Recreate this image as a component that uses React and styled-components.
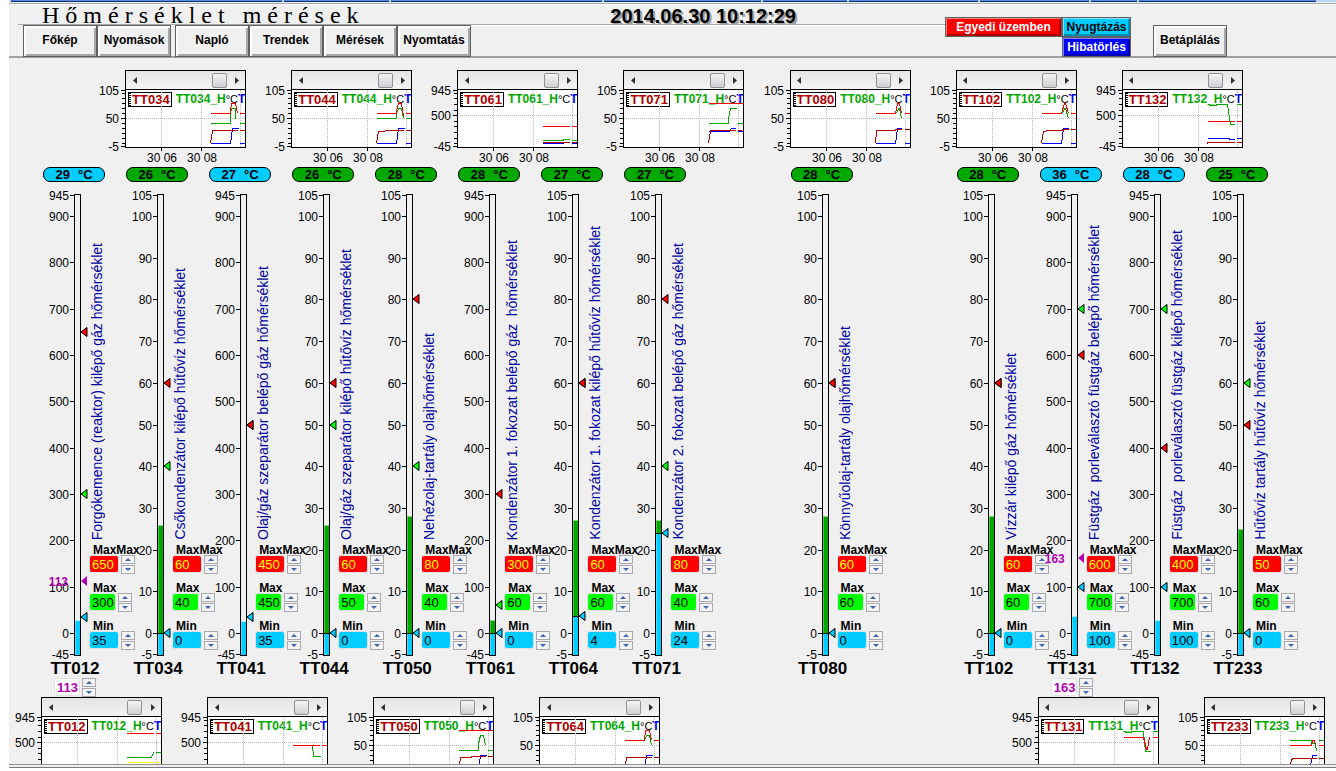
import React, { useState } from 'react'
import styled, { createGlobalStyle } from 'styled-components'

const sans = '"Liberation Sans", Arial, sans-serif'

const colors = {
    red: '#ff0000',
    dark: '#b00000',
    green: '#00a800',
    lime: '#00ff00',
    cyan: '#00ccff',
    blue: '#0000ff',
    yellow: '#ffff00',
    purple: '#b000b0'
}

const GlobalStyle = createGlobalStyle`
    * {
        box-sizing: border-box;
    }

    body {
        margin: 0;
        background-color: white;
        font-family: ${sans};
        color: black;
    }

    h1, p {
        margin: 0;
    }
`;

const Page = styled.div`
    height: 100vh;
    display: flex;
    flex-direction: column;
    padding-left: 9px;
    overflow: hidden;
`;

const TabStrip = styled.div`
    display: flex;
    gap: 2px;
    height: 5px;
    flex-shrink: 0;
    padding: 0 20px 0 2px;
    background: linear-gradient(#b8d4f8 0 2px, #f0f0f0 2px 3px, #a8a8a8 3px 4px, #ffffff 4px 5px);
`;

const StripTab = styled.div`
    flex: ${props => props.$grow};
    height: 2px;
    background: linear-gradient(#5c8cd0 0 1px, #003080 1px 2px);
`;

const Header = styled.header`
    display: flex;
    flex-shrink: 0;
    height: 53px;
    padding-right: 109px;
    background-color: #f0f0f0;
    border-bottom: 2px solid #a0a0a0;
`;

const HeaderMain = styled.div`
    flex: 1;
    padding-left: 9px;
`;

const TitleRow = styled.div`
    display: flex;
    justify-content: space-between;
    height: 20px;
    padding: 0 149px 0 24px;
    border-bottom: 1px solid #a8a8a8;
    box-shadow: 0 1px 0 white;
`;

const Title = styled.h1`
    font-family: "Liberation Serif", "Times New Roman", serif;
    font-size: 24px;
    font-weight: 400;
    line-height: 20px;
    letter-spacing: 6px;
    white-space: nowrap;
`;

const Clock = styled.time`
    font-size: 20px;
    font-weight: 700;
    line-height: 22px;
    text-shadow: 2px 2px 0 #a0a0a0;
    white-space: nowrap;
`;

const Nav = styled.nav`
    display: flex;
    gap: 4px;
    padding-left: 5px;
`;

const NavGroup = styled.div`
    display: flex;
`;

const NavButton = styled.button`
    width: 74px;
    height: 32px;
    padding: 0 0 2px;
    font-family: ${sans};
    font-size: 12px;
    font-weight: 700;
    white-space: nowrap;
    background-color: #f0f0f0;
    border: 1px solid #606060;
    box-shadow: inset 2px 2px 0 white, inset -2px -2px 0 #a8a8a8;
`;

const Alarms = styled.div`
    display: grid;
    grid-template-columns: 117px 69px;
    grid-template-rows: 20px 20px;
    align-content: start;
    padding-top: 12px;
    margin-right: 22px;
`;

const AlarmButton = styled.button`
    grid-column: ${props => props.$column};
    padding: 0;
    font-family: ${sans};
    font-size: 12px;
    font-weight: 700;
    line-height: 14px;
    white-space: nowrap;
    color: ${props => props.$color};
    background-color: ${props => props.$background};
    border: 1px solid #606060;
    box-shadow: inset 1px 1px 0 rgba(255, 255, 255, 0.5), inset -2px -2px 0 rgba(0, 0, 0, 0.3);
`;

const FeedButton = styled(NavButton)`
    margin-top: 20px;
`;

const Main = styled.main`
    flex: 1;
    min-height: 0;
    padding-top: 12px;
    overflow: hidden;
    background-color: #f0f0f0;
    border-bottom: 1px solid #909090;
`;

const StatusBar = styled.footer`
    flex-shrink: 0;
    height: 6px;
    border-top: 2px solid #f0f0f0;
    background: linear-gradient(#787880 0 1px, #ffffff 1px);
`;

const Slots = styled.div`
    display: grid;
    grid-template-columns: repeat(15, minmax(0, 1fr));
    padding-left: ${props => props.$left}px;
    padding-right: ${props => 81 - props.$left}px;
`;

/* Trend windows */

const TrendBox = styled.section`
    grid-column: ${props => props.$slot};
    display: grid;
    grid-template-columns: 26px 121px;
    height: 97px;
`;

const TrendAxis = styled.svg`
    width: 26px;
    height: 77px;
    overflow: visible;
`;

const TrendWindow = styled.div`
    height: 78px;
    border: 1px solid black;
    background-color: white;
`;

const ScrollBar = styled.div`
    display: flex;
    align-items: center;
    height: 19px;
    padding: 0 5px;
    background: linear-gradient(#e4e4e4, #f4f4f4);
    border-bottom: 1px solid black;
`;

const ScrollButton = styled.button`
    display: flex;
    align-items: center;
    justify-content: center;
    width: 7px;
    height: 16px;
    padding: 0;
    border: none;
    background: none;
`;

const ScrollRange = styled.input`
    appearance: none;
    flex: 1;
    min-width: 0;
    height: 16px;
    margin: 0 2px;
    background: none;

    &::-webkit-slider-thumb {
        appearance: none;
        width: 15px;
        height: 15px;
        border: 1px solid #909090;
        border-radius: 2px;
        background: linear-gradient(#f4f4f4, #d0d0d4);
    }
`;

const PlotArea = styled.div`
    display: grid;
    height: 57px;

    & > * {
        grid-area: 1 / 1;
    }
`;

const Plot = styled.svg`
    width: 119px;
    height: 57px;
    overflow: visible;
`;

const Legend = styled.div`
    display: flex;
    align-items: flex-start;
    width: 119px;
    padding: 2px 0 0 2px;
    overflow: hidden;
    font-size: 12px;
    font-weight: 700;
    line-height: 15px;
    white-space: nowrap;
`;

const LegendTag = styled.span`
    margin-right: 4px;
    padding: 0 1px 0 3px;
    font-size: 13px;
    line-height: 13px;
    color: ${colors.dark};
    background: repeating-linear-gradient(black 0 1px, transparent 1px 2px) left / 2px 100% no-repeat;
    border: 1px solid black;
`;

const LegendHigh = styled.span`
    width: 51px;
    color: ${colors.green};
`;

const LegendUnit = styled.span`
    width: 13px;
    font-size: 11px;
    font-weight: 400;
`;

const LegendTime = styled.span`
    color: ${colors.blue};
`;

const AxisText = styled.text`
    font-family: ${sans};
    font-size: 12px;
`;

/* Gauges */

const GaugeBox = styled.section`
    grid-column: ${props => props.$slot};
    display: flex;
    flex-direction: column;
    height: 530px;
`;

const Pill = styled.output`
    display: flex;
    justify-content: center;
    gap: 8px;
    width: 62px;
    height: 15px;
    font-size: 13px;
    font-weight: 700;
    line-height: 13px;
    background-color: ${props => props.$color};
    border: 1px solid black;
    border-radius: 7px;
`;

const GaugeBody = styled.div`
    display: grid;
    grid-template-columns: 31px 7px 60px;
    height: 462px;
    margin-top: 12px;
`;

const Scale = styled.svg`
    width: 31px;
    height: 462px;
    overflow: visible;
`;

const Bar = styled.div`
    position: relative;
    border: 1px solid black;
    background-color: #f0f0f0;
`;

const Fill = styled.div`
    position: absolute;
    left: 0;
    right: 0;
    bottom: 0;
    background-color: ${props => props.$color};
    border-top: 1px solid ${props => props.$top};
    box-shadow: inset 1px 0 0 rgba(255, 255, 255, 0.3);
`;

const Marker = styled.svg`
    position: absolute;
    left: 6px;
    width: 7px;
    height: 10px;
    margin-top: -6px;
`;

const SetPoint = styled.span`
    position: absolute;
    right: 12px;
    margin-top: -8px;
    font-size: 12px;
    font-weight: 700;
    line-height: 16px;
    color: ${colors.purple};
`;

const GaugeSide = styled.div`
    display: flex;
    flex-direction: column;
    justify-content: flex-end;
    align-items: flex-start;
    padding: 0 0 6px 8px;
`;

const Description = styled.p`
    writing-mode: vertical-rl;
    transform: rotate(180deg);
    margin-bottom: 5px;
    font-size: 14px;
    line-height: 16px;
    white-space: pre;
    color: #0000a0;
`;

const Setters = styled.div`
    display: flex;
    flex-direction: column;
    gap: 9px;
`;

const SetterBox = styled.div`
    display: grid;
    grid-template-columns: auto 14px;
    justify-content: start;
    column-gap: 2px;
`;

const SetterLabel = styled.label`
    grid-column: 1 / -1;
    width: 0;
    padding-left: 4px;
    font-size: 12px;
    font-weight: 700;
    line-height: 10px;
`;

const SetterInput = styled.input`
    width: ${props => props.$width}px;
    height: 18px;
    padding: 0 0 0 2px;
    font-family: ${sans};
    font-size: 13px;
    color: ${props => props.$color};
    background-color: ${props => props.$background};
    border: 1px solid #e0e0e8;
    border-radius: 3px;
`;

const TargetInput = styled(SetterInput)`
    font-weight: 700;
`;

const Spinner = styled.div`
    display: flex;
    flex-direction: column;
    gap: 1px;
`;

const SpinButton = styled.button`
    display: flex;
    align-items: center;
    justify-content: center;
    width: 14px;
    height: 9px;
    padding: 0;
    background-color: #f4f4f4;
    border: 1px solid #a8a8b0;
`;

const Tag = styled.h2`
    width: 64px;
    margin: 4px 0 0;
    font-size: 17px;
    font-weight: 700;
    line-height: 18px;
    text-align: center;
`;

const Target = styled.div`
    display: flex;
    gap: 2px;
    padding-left: 11px;
`;

const SCALES = {
    low: { min: -5, max: 105, mid: 50, step: 10, labels: [100, 90, 80, 70, 60, 50, 40, 30, 20, 10, 0] },
    high: { min: -45, max: 945, mid: 500, step: 100, labels: [900, 800, 700, 600, 500, 400, 300, 200, 100, 0] }
}

const gauges = [
    { slot: 1, tag: 'TT012', scale: 'high', value: 29, maxmax: 650, max: 300, min: 35, target: 113, text: 'Forgókemence (reaktor) kilépő gáz hőmérséklet' },
    { slot: 2, tag: 'TT034', scale: 'low', value: 26, maxmax: 60, max: 40, min: 0, text: 'Csőkondenzátor kilépő hűtővíz hőmérséklet' },
    { slot: 3, tag: 'TT041', scale: 'high', value: 27, maxmax: 450, max: 450, min: 35, text: 'Olaj/gáz szeparátor belépő gáz hőmérséklet' },
    { slot: 4, tag: 'TT044', scale: 'low', value: 26, maxmax: 60, max: 50, min: 0, text: 'Olaj/gáz szeparátor kilépő hűtővíz hőmérséklet' },
    { slot: 5, tag: 'TT050', scale: 'low', value: 28, maxmax: 80, max: 40, min: 0, text: 'Nehézolaj-tartály olajhőmérséklet' },
    { slot: 6, tag: 'TT061', scale: 'high', value: 28, maxmax: 300, max: 60, min: 0, text: 'Kondenzátor 1. fokozat belépő gáz  hőmérséklet' },
    { slot: 7, tag: 'TT064', scale: 'low', value: 27, maxmax: 60, max: 60, min: 4, text: 'Kondenzátor 1. fokozat kilépő hűtővíz hőmérséklet' },
    { slot: 8, tag: 'TT071', scale: 'low', value: 27, maxmax: 80, max: 40, min: 24, text: 'Kondenzátor 2. fokozat belépő gáz hőmérséklet' },
    { slot: 10, tag: 'TT080', scale: 'low', value: 28, maxmax: 60, max: 60, min: 0, text: 'Könnyűolaj-tartály olajhőmérséklet' },
    { slot: 12, tag: 'TT102', scale: 'low', value: 28, maxmax: 60, max: 60, min: 0, text: 'Vízzár kilépő gáz hőmérséklet' },
    { slot: 13, tag: 'TT131', scale: 'high', value: 36, maxmax: 600, max: 700, min: 100, target: 163, text: 'Füstgáz  porleválasztó füstgáz belépő hőmérséklet' },
    { slot: 14, tag: 'TT132', scale: 'high', value: 28, maxmax: 400, max: 700, min: 100, text: 'Füstgáz  porleválasztó füstgáz kilépő hőmérséklet' },
    { slot: 15, tag: 'TT233', scale: 'low', value: 25, maxmax: 50, max: 60, min: 0, text: 'Hűtővíz tartály hűtővíz hőmérséklet' }
]

// every line is [color, path] in plot pixels
const topTrends = [
    { slot: 2, tag: 'TT034', scale: 'low', lines: [
        ['blue', 'M84 53H104L106 38H112M113 53H118'],
        ['dark', 'M84 53L86 40H111M113 40H118'],
        ['green', 'M84 33H104V23L105 18H109V28M113 33H118'],
        ['red', 'M84 23H104V20L105 13H109L111 23M113 23H118']
    ] },
    { slot: 4, tag: 'TT044', scale: 'low', lines: [
        ['blue', 'M84 53H104L106 38H112M113 53H118'],
        ['dark', 'M84 53L86 41H92L93 40H111M113 40H118'],
        ['green', 'M84 28H104V23L106 18H109L111 28M113 28H118'],
        ['red', 'M84 23H104V20L106 13H109L111 26M113 23H118']
    ] },
    { slot: 6, tag: 'TT061', scale: 'high', lines: [
        ['blue', 'M84 53H105M113 53H118'],
        ['dark', 'M84 52H111M113 52H118'],
        ['green', 'M84 50H105V49H111M113 50H118'],
        ['red', 'M84 36H111M113 36H118']
    ] },
    { slot: 8, tag: 'TT071', scale: 'low', lines: [
        ['blue', 'M84 41H105L107 38H111M113 41H118'],
        ['dark', 'M84 53L86 41V40H111M113 40H117V39'],
        ['green', 'M84 33H104V28L106 18H112M113 33H118'],
        ['red', 'M84 13H118']
    ] },
    { slot: 10, tag: 'TT080', scale: 'low', lines: [
        ['blue', 'M84 53H104L106 38H110M113 53H118'],
        ['dark', 'M84 53L85 40H104V39H110M113 39H118'],
        ['green', 'M105 23L107 18H108L110 28'],
        ['red', 'M84 23H104L106 13H108L110 23M113 23H118']
    ] },
    { slot: 12, tag: 'TT102', scale: 'low', lines: [
        ['blue', 'M84 53H104L106 38H111M113 53H118'],
        ['dark', 'M84 53L86 41L92 40H105V39H111M113 39H118'],
        ['green', 'M105 23L107 18H108L111 28'],
        ['red', 'M84 23H104L107 13H108L111 23M113 23H118']
    ] },
    { slot: 14, tag: 'TT132', scale: 'high', lines: [
        ['blue', 'M84 48H106V49H111M113 48H118'],
        ['dark', 'M84 53V52H111M113 52H118'],
        ['red', 'M84 31H111M113 31H118'],
        ['green', 'M84 14H86V15H93V14H104L107 34H111M113 14H118']
    ] }
]

const bottomTrends = [
    { slot: 1, tag: 'TT012', scale: 'high', lines: [
        ['yellow', 'M84 45H111M113 45H118'],
        ['green', 'M84 40H109L111 35M113 35H118'],
        ['red', 'M84 16H111M113 16H118']
    ] },
    { slot: 3, tag: 'TT041', scale: 'high', lines: [
        ['green', 'M104 28L105 39H112'],
        ['red', 'M84 28H111M113 28H118']
    ] },
    { slot: 5, tag: 'TT050', scale: 'low', lines: [
        ['blue', 'M104 53L106 38H112'],
        ['dark', 'M84 53L86 40H97V39H111M113 39H118'],
        ['green', 'M84 33H104V26L106 18H109L111 28M113 33H118'],
        ['red', 'M84 13H118']
    ] },
    { slot: 7, tag: 'TT064', scale: 'low', lines: [
        ['blue', 'M104 53L106 38H112'],
        ['dark', 'M84 53L86 40H111M113 40H118'],
        ['green', 'M104 23L106 18H109L111 28'],
        ['red', 'M84 23H104L105 13H109L111 23M113 23H118']
    ] },
    { slot: 13, tag: 'TT131', scale: 'high', lines: [
        ['green', 'M84 14H86V15H92V14H104L106 34H111M113 14H118'],
        ['red', 'M84 20H104L107 32H108L110 20M113 20H118']
    ] },
    { slot: 15, tag: 'TT233', scale: 'low', lines: [
        ['blue', 'M104 53L107 38H111'],
        ['dark', 'M84 53L86 42L88 41H111M113 41H118'],
        ['green', 'M84 23H106V26H110L111 34M113 23H118'],
        ['red', 'M84 28H106L107 23H109L110 28M113 28H118']
    ] }
]

const range = (scale) => {
    let values = []
    for (let v = 0; v < scale.max; v += scale.step) values.push(v)
    return values
}

const Trend = ({ slot, tag, scale, lines }) => {
    const s = SCALES[scale]
    const y = v => Math.round(20 + (s.max - v) * 56 / (s.max - s.min))
    const middle = y(s.mid) - 20
    return (
        <TrendBox $slot={slot} aria-label={`${tag} trend`}>
            <TrendAxis shapeRendering="crispEdges">
                {[s.max, s.mid, s.min].map(v =>
                    <g key={v}>
                        <AxisText x="20" y={y(v) + 5} textAnchor="end">{v}</AxisText>
                        <path d={`M22 ${y(v) + 0.5}H26`} stroke="black" />
                    </g>
                )}
                {range(s).map(v => <path key={v} d={`M23 ${y(v) + 0.5}H26`} stroke="black" />)}
            </TrendAxis>
            <TrendWindow>
                <ScrollBar>
                    <ScrollButton aria-label={`${tag} vissza`}>
                        <svg width="4" height="7"><path d="M4 0V7L0 3.5Z" fill="#303030" /></svg>
                    </ScrollButton>
                    <ScrollRange type="range" defaultValue="94" aria-label={`${tag} idő`} />
                    <ScrollButton aria-label={`${tag} előre`}>
                        <svg width="4" height="7"><path d="M0 0V7L4 3.5Z" fill="#303030" /></svg>
                    </ScrollButton>
                </ScrollBar>
                <PlotArea>
                    <Legend>
                        <LegendTag>{tag}</LegendTag>
                        <LegendHigh>{tag}_H</LegendHigh>
                        <LegendUnit>°C</LegendUnit>
                        <LegendTime>T</LegendTime>
                    </Legend>
                    <Plot shapeRendering="crispEdges" fill="none">
                        <path d={`M0 ${middle + 0.5}H119M35.5 0V57M75.5 0V57M114.5 0V57`} stroke="#b8b8b8" strokeDasharray="1 1" />
                        {lines.map(([color, d], i) =>
                            <path key={i} d={d} stroke={colors[color]} transform="translate(0.5 0.5)" />
                        )}
                        <path d="M35.5 58V61M75.5 58V61" stroke="black" />
                        <AxisText x="36" y="72" textAnchor="middle" fill="black">30 06</AxisText>
                        <AxisText x="76" y="72" textAnchor="middle" fill="black">30 08</AxisText>
                    </Plot>
                </PlotArea>
            </TrendWindow>
        </TrendBox>
    )
}

const Arrows = ({ name, onStep }) => (
    <Spinner>
        <SpinButton aria-label={`${name} fel`} onClick={() => onStep(1)}>
            <svg width="6" height="3"><path d="M3 0L6 3H0Z" fill="#4060b0" /></svg>
        </SpinButton>
        <SpinButton aria-label={`${name} le`} onClick={() => onStep(-1)}>
            <svg width="6" height="3"><path d="M3 3L6 0H0Z" fill="#4060b0" /></svg>
        </SpinButton>
    </Spinner>
)

const Setter = ({ id, label, value, onChange, width, color, background }) => (
    <SetterBox>
        <SetterLabel htmlFor={id}>{label}</SetterLabel>
        <SetterInput
            id={id}
            value={value}
            onChange={e => onChange(Number(e.target.value) || 0)}
            $width={width}
            $color={color}
            $background={background}
        />
        <Arrows name={id} onStep={step => onChange(value + step)} />
    </SetterBox>
)

const Gauge = ({ slot, tag, scale, value, text, ...limits }) => {
    const [maxmax, setMaxmax] = useState(limits.maxmax)
    const [max, setMax] = useState(limits.max)
    const [min, setMin] = useState(limits.min)
    const [target, setTarget] = useState(limits.target)
    const s = SCALES[scale]
    const y = v => Math.round(1 + (s.max - v) * 459 / (s.max - s.min))
    const alarm = value < min
    const markers = [
        [max, colors.lime],
        [maxmax, colors.red],
        [min, colors.cyan]
    ]
    return (
        <GaugeBox $slot={slot} aria-label={tag}>
            <Pill $color={alarm ? colors.cyan : colors.green}>
                <span>{value}</span>
                <span>°C</span>
            </Pill>
            <GaugeBody>
                <Scale shapeRendering="crispEdges">
                    {[s.max, ...s.labels, s.min].map(v =>
                        <g key={v}>
                            <AxisText x="26" y={y(v) + 5} textAnchor="end">{v}</AxisText>
                            <path d={`M27 ${y(v) + 0.5}H31`} stroke="black" />
                        </g>
                    )}
                </Scale>
                <Bar>
                    <Fill
                        $color={alarm ? colors.cyan : colors.green}
                        $top={alarm ? '#a0f0ff' : '#80e080'}
                        style={{ height: 461 - y(value) }}
                    />
                    {!alarm && <Fill $color={colors.cyan} $top="black" style={{ height: 461 - y(min) }} />}
                    {markers.map(([v, color]) =>
                        <Marker key={color} style={{ top: y(v) }}>
                            <path d="M0 5L6 0V10Z" fill={color} />
                            <path d="M0 5L6 0.5V9.5Z" fill="none" stroke="black" />
                        </Marker>
                    )}
                    {target !== undefined &&
                        <>
                            <Marker style={{ top: y(target) }}>
                                <path d="M0 5L6 0V10Z" fill={colors.purple} />
                            </Marker>
                            <SetPoint style={{ top: y(target) }}>{target}</SetPoint>
                        </>
                    }
                </Bar>
                <GaugeSide>
                    <Description>{text}</Description>
                    <Setters>
                        <Setter id={`${tag}-maxmax`} label="MaxMax" value={maxmax} onChange={setMaxmax} width={30} color={colors.yellow} background={colors.red} />
                        <Setter id={`${tag}-max`} label="Max" value={max} onChange={setMax} width={27} color="black" background={colors.lime} />
                        <Setter id={`${tag}-min`} label="Min" value={min} onChange={setMin} width={30} color="black" background={colors.cyan} />
                    </Setters>
                </GaugeSide>
            </GaugeBody>
            <Tag>{tag}</Tag>
            {target !== undefined &&
                <Target>
                    <TargetInput
                        aria-label={`${tag} alapjel`}
                        value={target}
                        onChange={e => setTarget(Number(e.target.value) || 0)}
                        $width={26}
                        $color={colors.purple}
                        $background="white"
                    />
                    <Arrows name={`${tag} alapjel`} onStep={step => setTarget(target + step)} />
                </Target>
            }
        </GaugeBox>
    )
}

const App = () => (
    <>
        <GlobalStyle />
        <Page>
            <TabStrip>
                {[270, 104, 210, 156, 84, 128, 108, 46, 176].map((grow, i) => <StripTab key={i} $grow={grow} />)}
            </TabStrip>
            <Header>
                <HeaderMain>
                    <TitleRow>
                        <Title>Hőmérséklet mérések</Title>
                        <Clock>2014.06.30 10:12:29</Clock>
                    </TitleRow>
                    <Nav>
                        <NavGroup>
                            <NavButton>Főkép</NavButton>
                            <NavButton>Nyomások</NavButton>
                        </NavGroup>
                        <NavGroup>
                            <NavButton>Napló</NavButton>
                            <NavButton>Trendek</NavButton>
                            <NavButton>Mérések</NavButton>
                            <NavButton>Nyomtatás</NavButton>
                        </NavGroup>
                    </Nav>
                </HeaderMain>
                <Alarms>
                    <AlarmButton $column={1} $color="white" $background="#ff0000">Egyedi üzemben</AlarmButton>
                    <AlarmButton $column={2} $color="black" $background="#00ccff">Nyugtázás</AlarmButton>
                    <AlarmButton $column={2} $color="white" $background="#0000ff">Hibatörlés</AlarmButton>
                </Alarms>
                <FeedButton>Betáplálás</FeedButton>
            </Header>
            <Main>
                <Slots $left={7}>
                    {topTrends.map(trend => <Trend key={trend.tag} {...trend} />)}
                </Slots>
                <Slots $left={34}>
                    {gauges.map(gauge => <Gauge key={gauge.tag} {...gauge} />)}
                </Slots>
                <Slots $left={6}>
                    {bottomTrends.map(trend => <Trend key={trend.tag} {...trend} />)}
                </Slots>
            </Main>
            <StatusBar />
        </Page>
    </>
)

export default App
